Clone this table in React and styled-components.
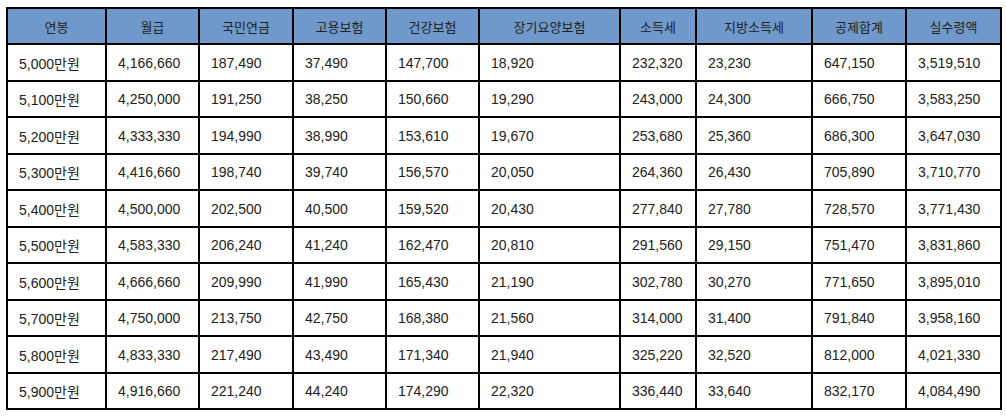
import React from 'react';
import styled, { createGlobalStyle } from 'styled-components';

const GlobalStyle = createGlobalStyle`
  body {
    margin: 0;
    background: #fff;
    font-family: "Liberation Sans", "Noto Sans CJK KR", sans-serif;
    color: #222;
  }
`;

const Page = styled.div`
  padding: 7px 0 0 6px;
`;

const Table = styled.div`
  display: inline-block;
  border-left: 2px solid #000;
  border-top: 2px solid #000;
`;

const Row = styled.div`
  display: grid;
  grid-template-columns: 99px 93px 94px 93px 93px 141px 76px 116px 94px 95px;
  height: ${(p) => (p.$head ? 36 : 37)}px;
  background: ${(p) => (p.$head ? '#7099cb' : '#fff')};
  &:nth-child(odd) {
    height: 36px;
  }
`;

const Cell = styled.div`
  box-sizing: border-box;
  border-right: 2px solid #000;
  border-bottom: 2px solid #000;
  display: flex;
  align-items: center;
  justify-content: ${(p) => (p.$head ? 'center' : 'flex-start')};
  padding-left: ${(p) => (p.$head ? 0 : 11)}px;
  font-size: ${(p) => (p.$head ? 13 : 14)}px;
  color: #222;
  white-space: nowrap;
`;

const heads = ['연봉', '월급', '국민연금', '고용보험', '건강보험', '장기요양보험', '소득세', '지방소득세', '공제합계', '실수령액'];

const rows = [
  ['5,000만원', '4,166,660', '187,490', '37,490', '147,700', '18,920', '232,320', '23,230', '647,150', '3,519,510'],
  ['5,100만원', '4,250,000', '191,250', '38,250', '150,660', '19,290', '243,000', '24,300', '666,750', '3,583,250'],
  ['5,200만원', '4,333,330', '194,990', '38,990', '153,610', '19,670', '253,680', '25,360', '686,300', '3,647,030'],
  ['5,300만원', '4,416,660', '198,740', '39,740', '156,570', '20,050', '264,360', '26,430', '705,890', '3,710,770'],
  ['5,400만원', '4,500,000', '202,500', '40,500', '159,520', '20,430', '277,840', '27,780', '728,570', '3,771,430'],
  ['5,500만원', '4,583,330', '206,240', '41,240', '162,470', '20,810', '291,560', '29,150', '751,470', '3,831,860'],
  ['5,600만원', '4,666,660', '209,990', '41,990', '165,430', '21,190', '302,780', '30,270', '771,650', '3,895,010'],
  ['5,700만원', '4,750,000', '213,750', '42,750', '168,380', '21,560', '314,000', '31,400', '791,840', '3,958,160'],
  ['5,800만원', '4,833,330', '217,490', '43,490', '171,340', '21,940', '325,220', '32,520', '812,000', '4,021,330'],
  ['5,900만원', '4,916,660', '221,240', '44,240', '174,290', '22,320', '336,440', '33,640', '832,170', '4,084,490'],
];

export default function App() {
  return (
    <Page>
      <GlobalStyle />
      <Table>
        <Row $head>
          {heads.map((h) => (
            <Cell key={h} $head>
              {h}
            </Cell>
          ))}
        </Row>
        {rows.map((r) => (
          <Row key={r[0]}>
            {r.map((v, i) => (
              <Cell key={i}>{v}</Cell>
            ))}
          </Row>
        ))}
      </Table>
    </Page>
  );
}
